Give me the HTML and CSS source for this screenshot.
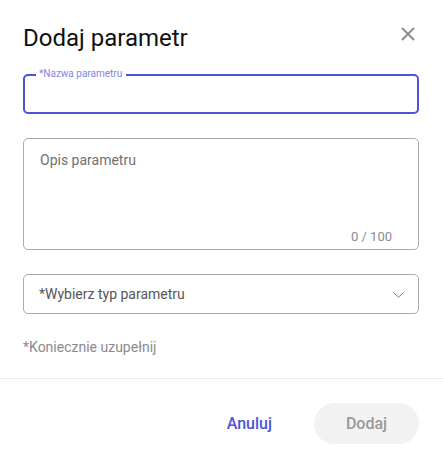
FILE: index.html
```html
<!DOCTYPE html>
<html lang="pl">
<head>
<meta charset="utf-8">
<title>Dodaj parametr</title>
<link rel="stylesheet" href="styles.css">
</head>
<body>
<div class="dialog">
  <div class="body">
    <div class="header">
      <h1 class="title">Dodaj parametr</h1>
      <button class="close" aria-label="Zamknij">
        <svg width="14" height="14" viewBox="0 0 14 14"><path d="M1 1L13 13M13 1L1 13" stroke="#8a8a8a" stroke-width="1.8" fill="none"/></svg>
      </button>
    </div>
    <div class="field field-focus">
      <span class="field-label">*Nazwa parametru</span>
    </div>
    <div class="textarea">
      <div class="placeholder">Opis parametru</div>
      <div class="counter">0 / 100</div>
    </div>
    <div class="select">
      <span class="select-text">*Wybierz typ parametru</span>
      <svg class="chevron" width="11" height="6" viewBox="0 0 11 6"><path d="M0.5 0.5L5.5 5.2L10.5 0.5" stroke="#777" stroke-width="1" fill="none"/></svg>
    </div>
    <div class="hint">*Koniecznie uzupełnij</div>
  </div>
  <div class="footer">
    <button class="btn btn-text">Anuluj</button>
    <button class="btn btn-disabled">Dodaj</button>
  </div>
</div>
</body>
</html>
```

FILE: styles.css
```css
* { box-sizing: border-box; }
html, body { margin: 0; padding: 0; background: #fff; }
body { font-family: Roboto, "Liberation Sans", sans-serif; color: #222; }

.dialog { width: 443px; }

.body { padding: 24px 24px 0 23px; display: flex; flex-direction: column; }

.header { display: flex; justify-content: space-between; align-items: flex-start; height: 28px; }
.title { margin: 0; font-size: 24px; line-height: 28px; font-weight: 400; color: #111; }
.close { border: 0; background: none; padding: 0; margin: 3px 4px 0 0; width: 14px; height: 14px; display: block; cursor: pointer; }
.close svg { display: block; }

.field { position: relative; margin-top: 22px; height: 40px; border-radius: 5px; }
.field-focus { border: 2px solid #4a55d8; }
.field-label { position: absolute; left: 11px; top: -9px; padding: 0 4px 0 3px; background: #fff; font-size: 10px; line-height: 14px; color: #7f87e6; }

.textarea { margin-top: 24px; height: 112px; border: 1px solid #a9a9a9; border-radius: 5px; padding: 11px 26px 4px 16px; display: flex; flex-direction: column; }
.placeholder { flex: 1; font-size: 14px; line-height: 20px; color: #707070; }
.counter { align-self: flex-end; font-size: 13px; line-height: 16px; color: #8c8c8c; }

.select { margin-top: 24px; height: 40px; border: 1px solid #a9a9a9; border-radius: 5px; padding: 0 14px 0 15px; display: flex; align-items: center; justify-content: space-between; }
.select-text { font-size: 14px; line-height: 20px; color: #555; }
.chevron { display: block; margin-top: 1px; }

.hint { margin-top: 25px; font-size: 14px; line-height: 16px; color: #8a8a8a; }

.footer { margin-top: 23px; border-top: 1px solid #ebebeb; padding: 24px 24px 0 0; display: flex; justify-content: flex-end; align-items: center; gap: 42px; }
.btn { font-family: Roboto, "Liberation Sans", sans-serif; font-size: 16px; font-weight: 500; border: 0; cursor: pointer; }
.btn-text { background: none; color: #4a55d8; padding: 0; line-height: 20px; }
.btn-disabled { background: #f2f2f2; color: #999; width: 105px; height: 41px; border-radius: 21px; padding: 0; }
```
